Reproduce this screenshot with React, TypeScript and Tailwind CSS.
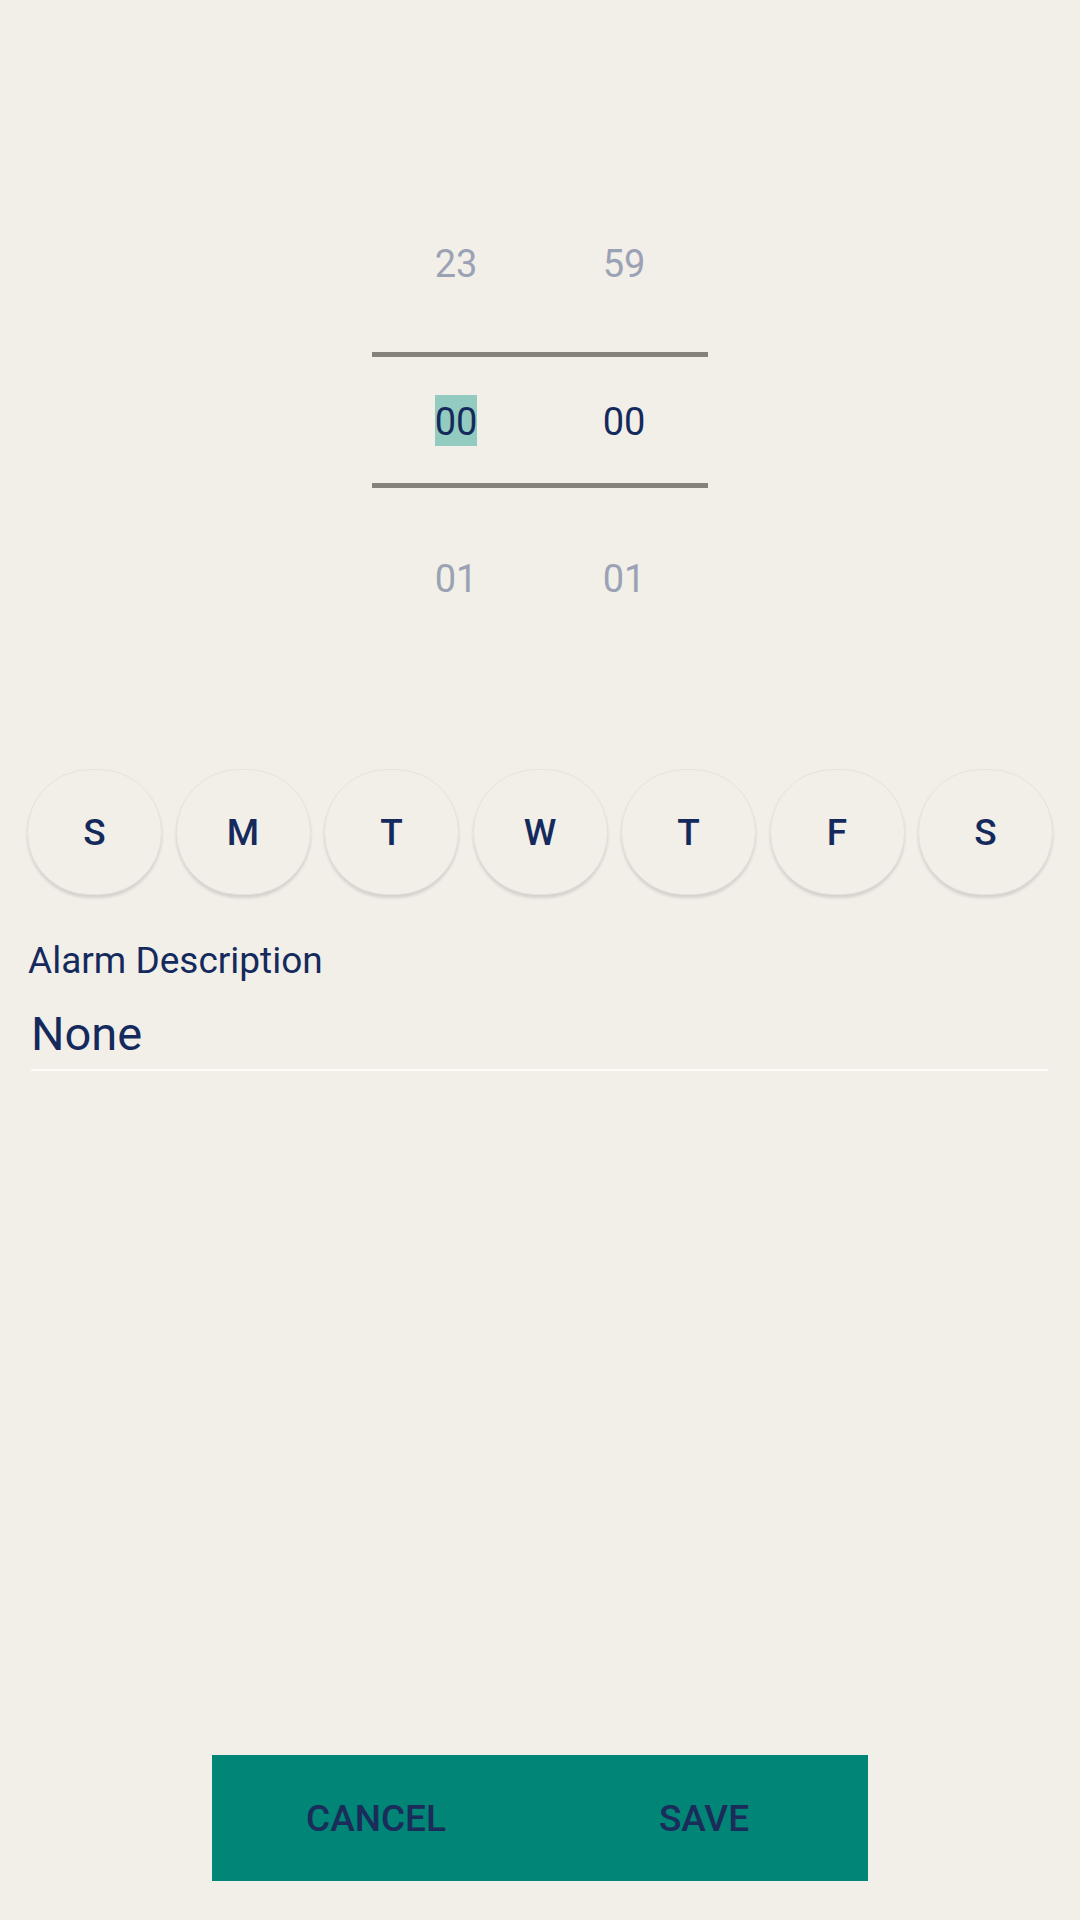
const days = ["S", "M", "T", "W", "T", "F", "S"]

const PickerRow = (props: { hour: string; minute: string }) => {
    const {hour, minute} = props
    return (
        <div className="grid grid-cols-2 h-[60px] text-[38px] leading-[60px] text-[#9ba2b5]">
            <div className="flex justify-center">{hour}</div>
            <div className="flex justify-center">{minute}</div>
        </div>
    )
}

const App = () => {
    return (
        <div
            className="w-[1080px] h-[1920px] bg-[#f2efe9] flex flex-col text-[#152a5c]"
            style={{fontFamily: "Roboto, 'Noto Sans', sans-serif"}}
        >
            {/* time picker */}
            <div className="w-[336px] mx-auto mt-[234px]">
                <PickerRow hour="23" minute="59"/>
                <div className="h-[58px]"/>
                <div className="h-[5px] bg-[#86817b]"/>
                <div className="grid grid-cols-2 h-[126px] text-[38px]">
                    <div className="flex items-center justify-center">
                        <span className="bg-[#93cbc0] h-[51px] leading-[55px] mt-[1px]">00</span>
                    </div>
                    <div className="flex items-center justify-center">
                        <span className="h-[51px] leading-[55px] mt-[1px]">00</span>
                    </div>
                </div>
                <div className="h-[5px] bg-[#86817b]"/>
                <div className="mt-[61px]">
                    <PickerRow hour="01" minute="01"/>
                </div>
            </div>

            {/* weekdays */}
            <div className="flex justify-between px-[27px] mt-[160px]">
                {days.map((day, i) => (
                    <button
                        key={i}
                        type="button"
                        className="w-[135px] h-[126px] rounded-full bg-[#f2efe9] flex items-center justify-center text-[37px] leading-[40px] pt-[2px] font-medium text-[#152a5c] border border-[#e6e2dc] shadow-[0_3px_3px_rgba(0,0,0,0.12)]"
                    >
                        {day}
                    </button>
                ))}
            </div>

            {/* description */}
            <p className="mt-[45px] px-[28px] text-[37px] leading-[42px]">Alarm Description</p>
            <div className="ml-[31px] mr-[32px] mt-[25px]">
                <p className="text-[47px] leading-[54px]">None</p>
                <div className="mt-[8px] h-[2px] bg-[#fcfbf8]"/>
            </div>

            <div className="flex-1"/>

            {/* actions */}
            <div className="w-[656px] h-[126px] mx-auto mb-[39px] bg-[#008577] grid grid-cols-2 text-[37px] font-medium text-[#1b2b5a]">
                <button type="button" className="flex items-center justify-center pt-[2px]">CANCEL</button>
                <button type="button" className="flex items-center justify-center pt-[2px]">SAVE</button>
            </div>
        </div>
    )
}

export default App
